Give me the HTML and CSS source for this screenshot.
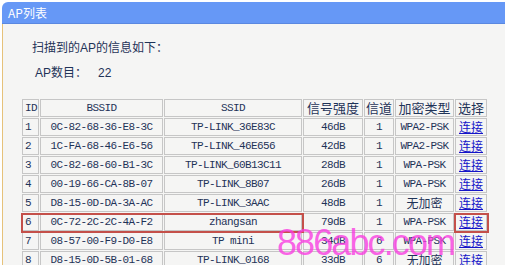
FILE: index.html
```html
<!DOCTYPE html>
<html>
  <head>
    <title>AP列表</title>
    <link rel="stylesheet" href="styles.css">
  </head>
  <body>
    <div class="title-bar">AP列表</div>

    <div class="panel">
      <p class="intro">扫描到的<span class="latin">AP</span>的信息如下：</p>
      <p class="count"><span class="latin">AP</span>数目：<span class="count-num latin">22</span></p>

      <!-- AP table -->
      <div class="table-wrap">
        <table class="ap-table">
          <tr>
            <th class="c-id mono">ID</th>
            <th class="c-bssid mono">BSSID</th>
            <th class="c-ssid mono">SSID</th>
            <th class="c-sig">信号强度</th>
            <th class="c-ch">信道</th>
            <th class="c-enc">加密类型</th>
            <th class="c-sel">选择</th>
          </tr>
          <tr>
            <td class="id mono">1</td><td class="mono">0C-82-68-36-E8-3C</td><td class="mono">TP-LINK_36E83C</td>
            <td class="mono">46dB</td><td class="mono">1</td><td class="mono">WPA2-PSK</td><td><a href="#">连接</a></td>
          </tr>
          <tr>
            <td class="id mono">2</td><td class="mono">1C-FA-68-46-E6-56</td><td class="mono">TP-LINK_46E656</td>
            <td class="mono">42dB</td><td class="mono">1</td><td class="mono">WPA2-PSK</td><td><a href="#">连接</a></td>
          </tr>
          <tr>
            <td class="id mono">3</td><td class="mono">0C-82-68-60-B1-3C</td><td class="mono">TP-LINK_60B13C11</td>
            <td class="mono">28dB</td><td class="mono">1</td><td class="mono">WPA-PSK</td><td><a href="#">连接</a></td>
          </tr>
          <tr>
            <td class="id mono">4</td><td class="mono">00-19-66-CA-8B-07</td><td class="mono">TP-LINK_8B07</td>
            <td class="mono">26dB</td><td class="mono">1</td><td class="mono">WPA-PSK</td><td><a href="#">连接</a></td>
          </tr>
          <tr>
            <td class="id mono">5</td><td class="mono">D8-15-0D-DA-3A-AC</td><td class="mono">TP-LINK_3AAC</td>
            <td class="mono">48dB</td><td class="mono">1</td><td>无加密</td><td><a href="#">连接</a></td>
          </tr>
          <tr>
            <td class="id mono">6</td><td class="mono">0C-72-2C-2C-4A-F2</td><td class="mono">zhangsan</td>
            <td class="mono">79dB</td><td class="mono">1</td><td class="mono">WPA-PSK</td><td><a href="#">连接</a></td>
          </tr>
          <tr>
            <td class="id mono">7</td><td class="mono">08-57-00-F9-D0-E8</td><td class="mono">TP mini</td>
            <td class="mono">34dB</td><td class="mono">6</td><td class="mono">WPA-PSK</td><td><a href="#">连接</a></td>
          </tr>
          <tr>
            <td class="id mono">8</td><td class="mono">D8-15-0D-5B-01-68</td><td class="mono">TP-LINK_0168</td>
            <td class="mono">33dB</td><td class="mono">6</td><td>无加密</td><td><a href="#">连接</a></td>
          </tr>
        </table>

        <!-- red marks round row 6 -->
        <div class="mark mark-row"></div>
        <div class="mark mark-link"></div>

        <div class="watermark">886abc.com</div>
      </div>
    </div>
  </body>
</html>
```

FILE: styles.css
```css
body {
  margin: 0;
  background-color: #fff;
  font-family: "Noto Sans CJK SC", sans-serif;
  font-size: 12px;
  color: #1f3358;
  overflow: hidden;
}

.mono {
  font-family: "Liberation Mono", "Noto Sans CJK SC", monospace;
  font-size: 11px;
  letter-spacing: -0.6px;
}

.latin {
  font-family: "Liberation Sans", Arial, sans-serif;
  font-size: 12px;
}

.title-bar {
  margin: 2px 0 0 2px;
  height: 22px;
  line-height: 22px;
  padding-left: 6px;
  background-color: #6698f6;
  border-top-left-radius: 6px;
  border-bottom: 1px solid #5a88e0;
  color: #fff;
  font-size: 12px;
  box-sizing: border-box;
}

.panel {
  margin-left: 2px;
  border-left: 1px solid #e6c27a;
  background-color: #f5f5f4;
  height: 243px;
  padding: 15px 0 0 29px;
  box-sizing: border-box;
}

.intro,
.count {
  margin: 0;
  line-height: 16px;
}

.count {
  margin-top: 8px;
  padding-left: 3px;
}

.count-num {
  margin-left: 11px;
}

.table-wrap {
  position: relative;
  margin: 17px 0 0 -11px;
  width: 467px;
}

.ap-table {
  border-collapse: separate;
  border-spacing: 1px;
  table-layout: fixed;
  width: 467px;
}

.ap-table th,
.ap-table td {
  height: 18px;
  padding: 0;
  border: 1px solid #c6c6c6;
  box-sizing: border-box;
  text-align: center;
  font-weight: normal;
  line-height: 16px;
  white-space: nowrap;
  overflow: hidden;
}

.ap-table th {
  font-size: 13px;
}

.ap-table th.mono {
  font-size: 11px;
}

.ap-table td.id,
.ap-table th.c-id {
  text-align: left;
  padding-left: 2px;
}

.c-id { width: 17px; }
.c-bssid { width: 123px; }
.c-ssid { width: 138px; }
.c-sig { width: 60px; }
.c-ch { width: 30px; }
.c-enc { width: 59px; }
.c-sel { width: 32px; }

.ap-table a {
  color: #1515c8;
  text-decoration: underline;
}

.mark {
  position: absolute;
  top: 115px;
  height: 20px;
  border: 2px solid #c4504a;
  box-sizing: border-box;
}

.mark-row {
  left: 0;
  width: 283px;
}

.mark-link {
  left: 433px;
  width: 35px;
}

.watermark {
  position: absolute;
  left: 256px;
  top: 127px;
  font-family: "Liberation Sans", Arial, sans-serif;
  font-size: 36px;
  line-height: 36px;
  letter-spacing: -1.9px;
  color: rgba(250, 60, 225, 0.8);
  white-space: nowrap;
}
```
